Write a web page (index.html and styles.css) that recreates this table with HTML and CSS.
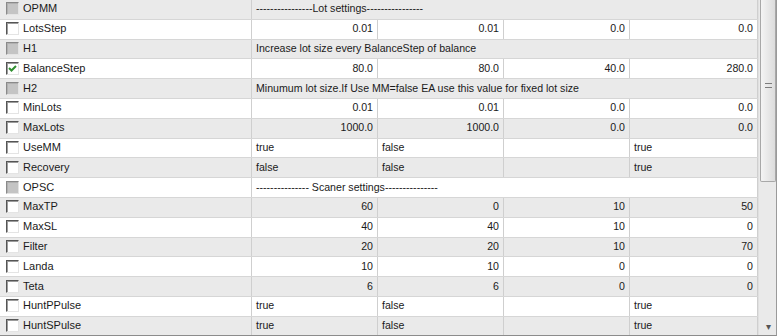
FILE: index.html
```html
<!DOCTYPE html>
<html>
<head>
<meta charset="utf-8">
<link rel="stylesheet" href="styles.css">
</head>
<body>
<div class="frame">
  <div class="grid">
    <div class="row alt head"><div class="name"><span class="cb dis"></span>OPMM</div><div class="span">----------------Lot settings----------------</div></div>
    <div class="row"><div class="name"><span class="cb"></span>LotsStep</div><div class="v n">0.01</div><div class="v n">0.01</div><div class="v n">0.0</div><div class="v n last">0.0</div></div>
    <div class="row alt head"><div class="name"><span class="cb dis"></span>H1</div><div class="span">Increase lot size every BalanceStep of balance</div></div>
    <div class="row"><div class="name"><span class="cb on"><svg viewBox="0 0 11 11" width="11" height="11"><path d="M2 5 L4.5 7.5 L9 3" fill="none" stroke="#2f8f2f" stroke-width="2"/></svg></span>BalanceStep</div><div class="v n">80.0</div><div class="v n">80.0</div><div class="v n">40.0</div><div class="v n last">280.0</div></div>
    <div class="row alt head"><div class="name"><span class="cb dis"></span>H2</div><div class="span">Minumum lot size.If Use MM=false EA use this value for fixed lot size</div></div>
    <div class="row"><div class="name"><span class="cb"></span>MinLots</div><div class="v n">0.01</div><div class="v n">0.01</div><div class="v n">0.0</div><div class="v n last">0.0</div></div>
    <div class="row alt"><div class="name"><span class="cb"></span>MaxLots</div><div class="v n">1000.0</div><div class="v n">1000.0</div><div class="v n">0.0</div><div class="v n last">0.0</div></div>
    <div class="row"><div class="name"><span class="cb"></span>UseMM</div><div class="v">true</div><div class="v">false</div><div class="v"></div><div class="v last">true</div></div>
    <div class="row alt"><div class="name"><span class="cb"></span>Recovery</div><div class="v">false</div><div class="v">false</div><div class="v"></div><div class="v last">true</div></div>
    <div class="row head"><div class="name"><span class="cb dis"></span>OPSC</div><div class="span">--------------- Scaner settings---------------</div></div>
    <div class="row alt"><div class="name"><span class="cb"></span>MaxTP</div><div class="v n">60</div><div class="v n">0</div><div class="v n">10</div><div class="v n last">50</div></div>
    <div class="row"><div class="name"><span class="cb"></span>MaxSL</div><div class="v n">40</div><div class="v n">40</div><div class="v n">10</div><div class="v n last">0</div></div>
    <div class="row alt"><div class="name"><span class="cb"></span>Filter</div><div class="v n">20</div><div class="v n">20</div><div class="v n">10</div><div class="v n last">70</div></div>
    <div class="row"><div class="name"><span class="cb"></span>Landa</div><div class="v n">10</div><div class="v n">10</div><div class="v n">0</div><div class="v n last">0</div></div>
    <div class="row alt"><div class="name"><span class="cb"></span>Teta</div><div class="v n">6</div><div class="v n">6</div><div class="v n">0</div><div class="v n last">0</div></div>
    <div class="row"><div class="name"><span class="cb"></span>HuntPPulse</div><div class="v">true</div><div class="v">false</div><div class="v"></div><div class="v last">true</div></div>
    <div class="row alt"><div class="name"><span class="cb"></span>HuntSPulse</div><div class="v">true</div><div class="v">false</div><div class="v"></div><div class="v last">true</div></div>
  </div>
  <div class="scroll">
    <div class="thumb"><span class="grip"></span></div>
    <div class="track"></div>
    <div class="arrow">&#9662;</div>
  </div>
</div>
</body>
</html>
```
FILE: styles.css
```css
html, body { margin: 0; padding: 0; background: #fff; }
body { width: 777px; height: 336px; overflow: hidden; font-family: "Liberation Sans", Arial, sans-serif; font-size: 10.6px; color: #1a1a1a; }
.frame { display: flex; width: 777px; height: 336px; box-sizing: border-box; border-right: 1px solid #9a9a9a; border-bottom: 1px solid #8c8c8c; overflow: hidden; }
.grid { width: 758px; flex: none; display: flex; flex-direction: column; }
.row { display: flex; height: 19.8px; flex: none; box-sizing: border-box; border-bottom: 1px solid #d6d6d6; background: #fff; }
.row.alt { background: #eaeaea; }
.name { width: 252px; flex: none; display: flex; align-items: center; box-sizing: border-box; border-right: 1px solid #cfcfcf; padding-left: 6px; padding-bottom: 2px; font-size: 11px; }
.v { width: 126px; flex: none; box-sizing: border-box; border-right: 1px solid #cfcfcf; padding: 0 4px 2px; display: flex; align-items: center; }
.v.n { justify-content: flex-end; }
.v.last { width: 128px; }
.span { flex: 1; padding: 0 4px 2px; display: flex; align-items: center; border-right: 1px solid #cfcfcf; white-space: nowrap; overflow: hidden; }
.cb { width: 13px; height: 13px; box-sizing: border-box; flex: none; margin-right: 4px; margin-top: 1px; background: #fff; border-top: 1px solid #555; border-left: 1px solid #555; border-right: 1px solid #e4e4e4; border-bottom: 1px solid #e4e4e4; box-shadow: inset 1px 1px 0 #9c9c9c; display: flex; align-items: center; justify-content: center; }
.cb.dis { background: #c4c4c4; border-top-color: #8a8a8a; border-left-color: #8a8a8a; box-shadow: inset 1px 1px 0 #b0b0b0; }
.cb svg { display: block; }
.scroll { width: 18px; flex: none; display: flex; flex-direction: column; background: #eaeaea; border-left: 1px solid #e0e0e0; }
.thumb { height: 182px; flex: none; box-sizing: border-box; margin: 0 1px; background: linear-gradient(to right, #f4f4f4, #dcdcdc); border: 1px solid #a8a8a8; border-top: none; border-radius: 0 0 2px 2px; display: flex; align-items: center; justify-content: center; padding-bottom: 10px; }
.grip { width: 7px; height: 5px; border-top: 1px solid #7d7d7d; border-bottom: 1px solid #7d7d7d; box-sizing: border-box; position: relative; }
.track { flex: 1; }
.arrow { height: 18px; flex: none; color: #555; font-size: 10px; display: flex; align-items: center; justify-content: center; }
```
